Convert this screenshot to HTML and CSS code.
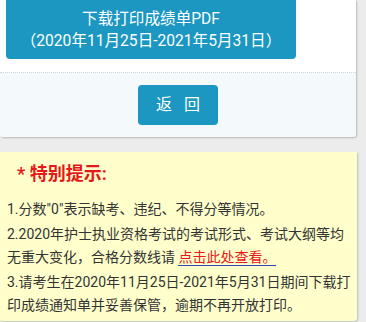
FILE: index.html
```html
<!DOCTYPE html>
<html lang="zh-CN">
<head>
<meta charset="utf-8">
<link rel="stylesheet" href="styles.css">
</head>
<body>
<div class="card">
  <div class="card-top">
    <a class="pdf-btn">下载打印成绩单PDF<br>（2020年11月25日-2021年5月31日）</a>
  </div>
  <div class="card-bottom">
    <a class="back-btn">返&nbsp;&nbsp;&nbsp;回</a>
  </div>
</div>
<div class="notice">
  <div class="notice-title">* 特别提示:</div>
  <p>1.分数"0"表示缺考、违纪、不得分等情况。</p>
  <p>2.2020年护士执业资格考试的考试形式、考试大纲等均无重大变化，合格分数线请 <a class="link">点击此处查看。</a></p>
  <p>3.请考生在2020年11月25日-2021年5月31日期间下载打印成绩通知单并妥善保管，逾期不再开放打印。</p>
</div>
</body>
</html>
```
FILE: styles.css
```css
html, body {
  margin: 0;
  padding: 0;
}
body {
  width: 366px;
  height: 322px;
  overflow: hidden;
  background: #ececec;
  font-family: Roboto, "Noto Sans CJK SC", sans-serif;
}
.card {
  width: 356px;
  background: #fff;
  box-shadow: 1px 1px 2px rgba(0, 0, 0, 0.22);
  border-radius: 0 0 3px 3px;
}
.card-top {
  height: 72px;
  padding: 0 6px;
  box-sizing: border-box;
}
.pdf-btn {
  display: flex;
  flex-direction: column;
  justify-content: center;
  width: 290px;
  height: 59px;
  box-sizing: border-box;
  background: #1b97c2;
  border-radius: 0 0 4px 4px;
  color: #fff;
  font-size: 15.6px;
  line-height: 22px;
  text-align: center;
}
.card-bottom {
  border-top: 1px dotted #d2d6d8;
  background: #f4f9fb;
  height: 65px;
  display: flex;
  justify-content: center;
  align-items: flex-start;
  padding-top: 12px;
  box-sizing: border-box;
  border-radius: 0 0 3px 3px;
}
.back-btn {
  width: 80px;
  height: 40px;
  background: #1b97c2;
  border-radius: 4px;
  color: #fff;
  font-size: 16px;
  line-height: 40px;
  text-align: center;
}
.notice {
  margin-top: 15px;
  width: 357px;
  box-sizing: border-box;
  background: #ffffcc;
  box-shadow: 1px 1px 2px rgba(0, 0, 0, 0.2);
  border-radius: 0 0 3px 3px;
  padding: 10px 6px 2px 7px;
  color: #333;
}
.notice-title {
  color: #e8171a;
  font-weight: bold;
  font-size: 18px;
  line-height: 24px;
  padding-left: 10px;
  margin-bottom: 12px;
}
.notice p {
  margin: 0 0 2px;
  font-size: 14px;
  line-height: 23px;
}
.link {
  color: #e8171a;
  text-decoration: none;
  border-bottom: 1px solid #3344bb;
}
```
